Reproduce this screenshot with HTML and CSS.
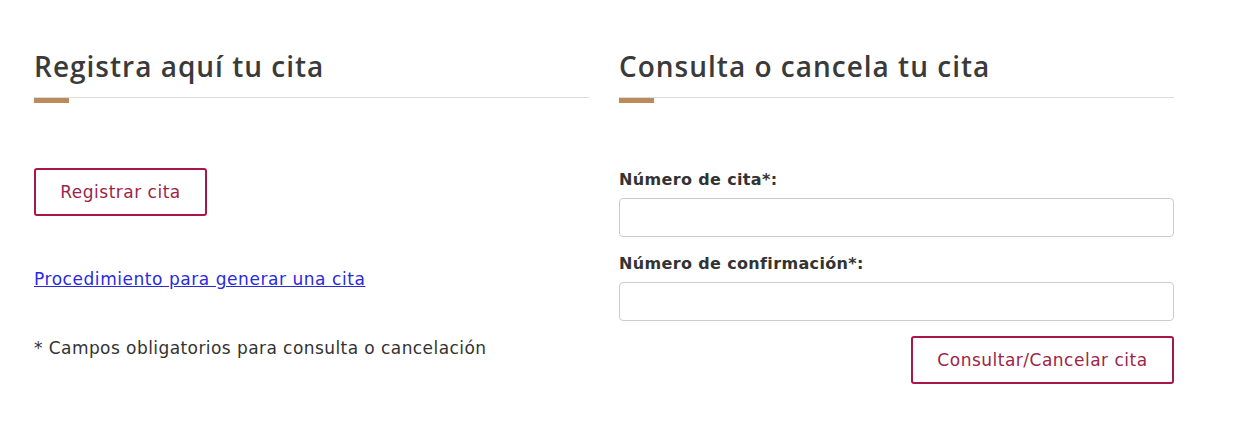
FILE: index.html
```html
<!DOCTYPE html>
<html lang="es">
<head>
  <meta charset="UTF-8">
  <meta name="viewport" content="width=device-width, initial-scale=1.0">
  <title>Citas</title>
  <link rel="stylesheet" href="styles.css">
</head>
<body>

  <div class="citas">
    <section class="col">
      <h2>Registra aquí tu cita</h2>
      <div class="divider"><span></span></div>

      <button type="button" class="btn-outline btn-registrar">Registrar cita</button>

      <a href="#" class="link-proc">Procedimiento para generar una cita</a>

      <p class="nota">* Campos obligatorios para consulta o cancelación</p>
    </section>

    <section class="col">
      <h2>Consulta o cancela tu cita</h2>
      <div class="divider"><span></span></div>

      <form class="consulta-form">
        <label for="numero-cita">Número de cita*:</label>
        <input type="text" id="numero-cita" name="numero-cita">

        <label for="numero-conf">Número de confirmación*:</label>
        <input type="text" id="numero-conf" name="numero-conf">

        <button type="submit" class="btn-outline btn-consultar">Consultar/Cancelar cita</button>
      </form>
    </section>
  </div>

</body>
</html>
```

FILE: styles.css
```css
body {
  margin: 0;
  padding: 0;
  font-family: 'DejaVu Sans', 'Open Sans', sans-serif;
  color: #333;
  background: #fff;
}

.citas {
  display: grid;
  grid-template-columns: 555px 555px;
  column-gap: 30px;
  padding: 46px 0 0 34px;
}

.col {
  display: flex;
  flex-direction: column;
  align-items: flex-start;
}

h2 {
  margin: 0;
  font-family: 'Open Sans', sans-serif;
  font-size: 28px;
  line-height: 40px;
  font-weight: 600;
  letter-spacing: 1px;
  color: #3a3a3a;
}

.divider {
  align-self: stretch;
  margin-top: 11px;
  border-top: 1px solid #dcdcdc;
}

.divider span {
  display: block;
  width: 35px;
  height: 5px;
  background: #bc8a5a;
}

.btn-outline {
  height: 48px;
  padding: 0;
  background: #fff;
  border: 2px solid #a8174a;
  border-radius: 3px;
  color: #9d2449;
  font-family: inherit;
  font-size: 17px;
  letter-spacing: 0.5px;
  cursor: pointer;
}

.btn-registrar {
  width: 173px;
  margin-top: 65px;
}

.link-proc {
  margin-top: 51px;
  font-size: 17px;
  line-height: 24px;
  letter-spacing: 0.55px;
  color: #2a2ae0;
}

.nota {
  margin: 45px 0 0;
  font-size: 17px;
  line-height: 24px;
  letter-spacing: 0.43px;
}

.consulta-form {
  align-self: stretch;
  display: flex;
  flex-direction: column;
  margin-top: 65px;
}

.consulta-form label {
  font-size: 16px;
  line-height: 24px;
  font-weight: 600;
  letter-spacing: 0.35px;
}

.consulta-form input {
  height: 39px;
  box-sizing: border-box;
  margin: 6px 0 15px;
  border: 1px solid #ccc;
  border-radius: 4px;
  padding: 6px 12px;
  font-size: 16px;
}

.btn-consultar {
  align-self: flex-end;
  width: 263px;
  margin-top: 0;
}
```
